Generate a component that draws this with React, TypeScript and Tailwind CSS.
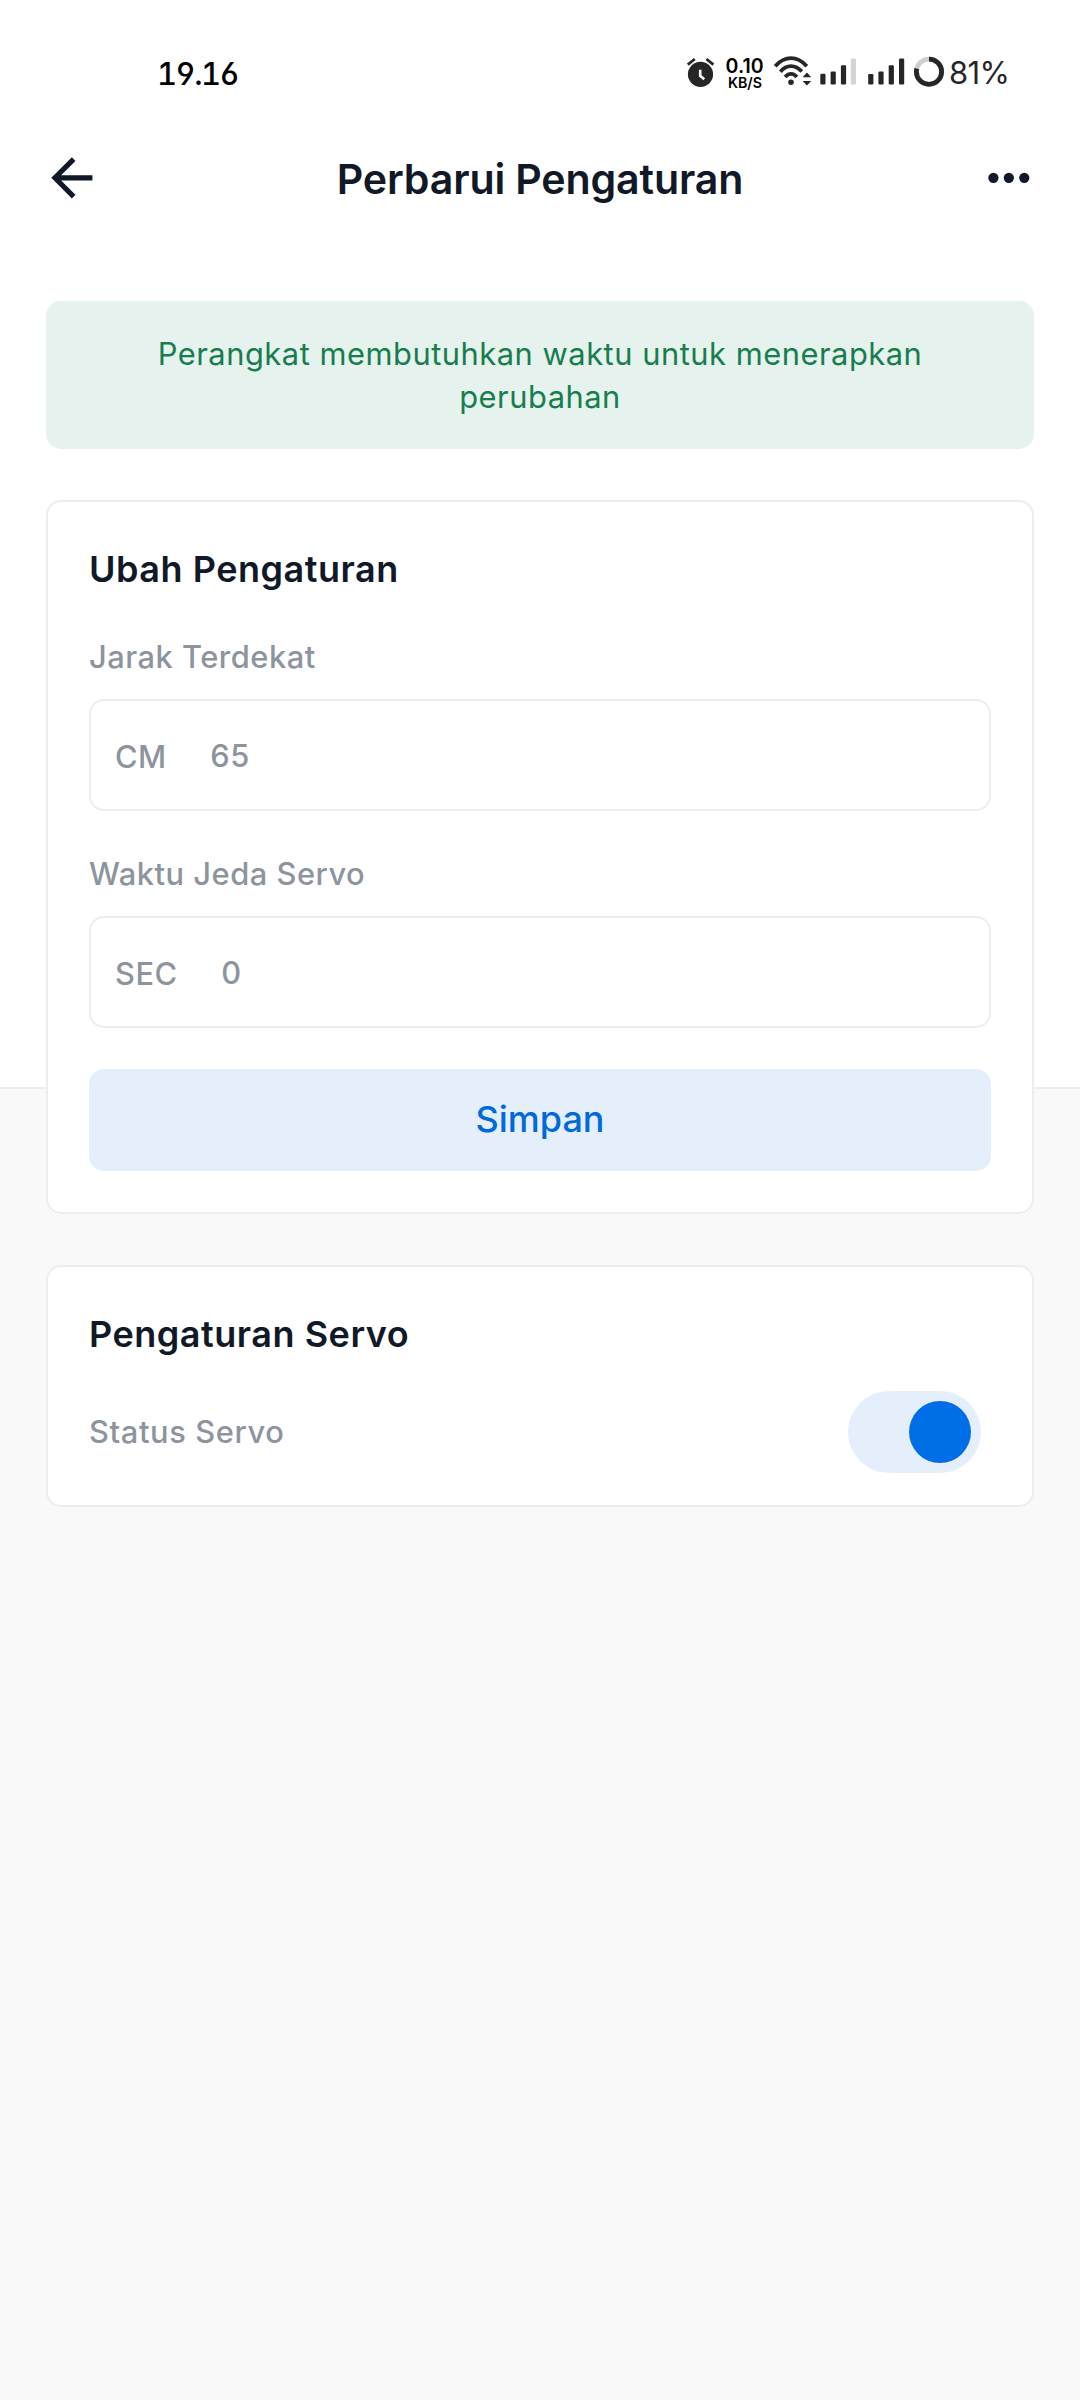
import { useState, type ReactNode } from "react";

function StatusIcons() {
  return (
    <svg className="block h-[110px] w-[280px]" viewBox="670 0 280 110" fill="#262626">
      <circle cx="700.5" cy="74.3" r="12.6" />
      <path d="M687.8 64.6l7-5.6M713.4 64.6l-7-5.6" stroke="#262626" strokeWidth="2.8" fill="none" />
      <path d="M700.2 69.8v6l4 3.4" stroke="#fff" strokeWidth="2.6" fill="none" />
      <text x="744.6" y="73" textAnchor="middle" fontSize="19.5" fontWeight="600" fill="#000" textLength="38" lengthAdjust="spacingAndGlyphs">0.10</text>
      <text x="745" y="87.8" textAnchor="middle" fontSize="14.8" fontWeight="600" fill="#000" textLength="34" lengthAdjust="spacingAndGlyphs">KB/S</text>
      <g fill="none" stroke="#262626" strokeWidth="3.8">
        <path d="M775.2 66.2Q782.5 58.2 791 58.2T806.8 66.2" />
        <path d="M780.4 71.8Q785 66.2 791 66.2T801.8 71.6" />
        <path d="M785.2 77Q787.6 73.8 791 73.8T796.8 77" />
      </g>
      <circle cx="791" cy="82.2" r="2.8" />
      <path d="M802.6 77.2l4.3-4.6 4.3 4.6zM802.6 81l4.3 4.6 4.3-4.6z" />
      <rect x="820.3" y="73.8" width="5.2" height="10.7" rx="1.2" />
      <rect x="830.6" y="71.4" width="5.2" height="13.1" rx="1.2" />
      <rect x="840.9" y="65.2" width="5.2" height="19.3" rx="1.2" />
      <rect x="850.8" y="58.6" width="5.2" height="25.9" rx="1.2" fill="#d4d4d4" />
      <rect x="868.2" y="74" width="5.2" height="10.5" rx="1.2" />
      <rect x="878.4" y="71.6" width="5.2" height="12.9" rx="1.2" />
      <rect x="888.7" y="65.2" width="5.2" height="19.3" rx="1.2" />
      <rect x="899" y="58.6" width="5.2" height="25.9" rx="1.2" />
      <circle cx="929" cy="71.7" r="12.6" fill="none" stroke="#cfcfcf" strokeWidth="4.8" />
      <circle
        cx="929"
        cy="71.7"
        r="12.6"
        fill="none"
        stroke="#262626"
        strokeWidth="4.8"
        pathLength="100"
        strokeDasharray="79 21"
        transform="rotate(-90 929 71.7)"
      />
    </svg>
  );
}

function StatusBar() {
  return (
    <div className="flex h-[110px] items-start pl-[157px]">
      <span className="mt-[53px] w-[513px] text-[31px] leading-[42px] font-medium tracking-[-1.5px] text-black [font-feature-settings:'ss01','tnum']">19.16</span>
      <StatusIcons />
      <span className="mt-[52px] -ml-[1px] text-[31px] leading-[42px] tracking-[-0.6px] text-[#262626]">81%</span>
    </div>
  );
}

function Header() {
  return (
    <header className="flex h-[136.6px] items-center justify-between px-[40.6px] text-[#111827]">
      <button aria-label="Kembali">
        <svg className="block size-[61.7px]" viewBox="0 0 24 24" fill="currentColor">
          <path d="M20 11H7.83l5.59-5.59L12 4l-8 8 8 8 1.41-1.41L7.83 13H20v-2z" />
        </svg>
      </button>
      <h1 className="pt-[1px] text-[41.14px] leading-[52px] font-semibold tracking-[-0.15px]">Perbarui Pengaturan</h1>
      <button aria-label="Menu">
        <svg className="block size-[61.7px]" viewBox="0 0 24 24" fill="currentColor">
          <circle cx="6" cy="12" r="2" />
          <circle cx="12" cy="12" r="2" />
          <circle cx="18" cy="12" r="2" />
        </svg>
      </button>
    </header>
  );
}

function Card({ title, children }: { title: string; children: ReactNode }) {
  return (
    <section className="rounded-[15px] border-2 border-[#ededed] bg-white px-[41px]">
      <h2 className="mt-[41px] text-[36px] leading-[52px] font-semibold tracking-[0.52px] text-[#111827]">{title}</h2>
      {children}
    </section>
  );
}

function Field({ label, unit, value }: { label: string; unit: string; value: string }) {
  return (
    <div>
      <div className="text-[30.857px] leading-[44px] font-medium tracking-[0.5px] text-[#8d949e]">{label}</div>
      <div className="mt-[20px] flex h-[112px] items-center rounded-[15px] border-2 border-[#ededed] pt-[2px] pl-[24px] text-[30.857px] leading-[44px] tracking-[0.5px] text-[#8d949e]">
        <span className="mt-[2px] mr-[43.5px] font-medium">{unit}</span>
        <span className="font-medium">{value}</span>
      </div>
    </div>
  );
}

export default function App() {
  const [on, setOn] = useState(true);
  return (
    <div className="relative isolate h-[2400px] w-[1080px] overflow-hidden bg-[#f9f9f9] font-['Inter',sans-serif]">
      <div className="absolute inset-x-0 top-0 -z-10 h-[1089px] border-b-2 border-[#ededed] bg-white" />
      <StatusBar />
      <Header />
      <main className="mt-[54.4px] flex flex-col px-[46px]">
        <p className="h-[148px] rounded-[15px] bg-[#e5f2ed] px-[62px] py-[31px] text-center text-[30.857px] leading-[43.2px] tracking-[0.52px] text-[#177d4e]">
          Perangkat membutuhkan waktu untuk menerapkan<br />perubahan
        </p>
        <div className="mt-[51px] flex flex-col gap-[51px]">
          <Card title="Ubah Pengaturan">
            <div className="mt-[40px] flex flex-col gap-[41px]">
              <Field label="Jarak Terdekat" unit="CM" value="65" />
              <Field label="Waktu Jeda Servo" unit="SEC" value="0" />
            </div>
            <button className="mt-[41px] mb-[41px] block h-[102px] w-full rounded-[15px] bg-[#e5effb] pb-[2px] text-[36px] leading-[52px] font-medium text-[#006adc]">
              Simpan
            </button>
          </Card>
          <Card title="Pengaturan Servo">
            <div className="mt-[31px] mb-[32px] flex items-center justify-between pr-[10px]">
              <span className="text-[30.857px] leading-[44px] font-medium tracking-[0.6px] text-[#8d949e]">Status Servo</span>
              <button
                role="switch"
                aria-checked={on}
                aria-label="Status Servo"
                onClick={() => setOn(!on)}
                className={`flex h-[82px] w-[133px] items-center rounded-full bg-[#e5effb] px-[10px] ${on ? "justify-end" : "justify-start"}`}
              >
                <span className="size-[62px] rounded-full bg-[#006ee6]" />
              </button>
            </div>
          </Card>
        </div>
      </main>
    </div>
  );
}
